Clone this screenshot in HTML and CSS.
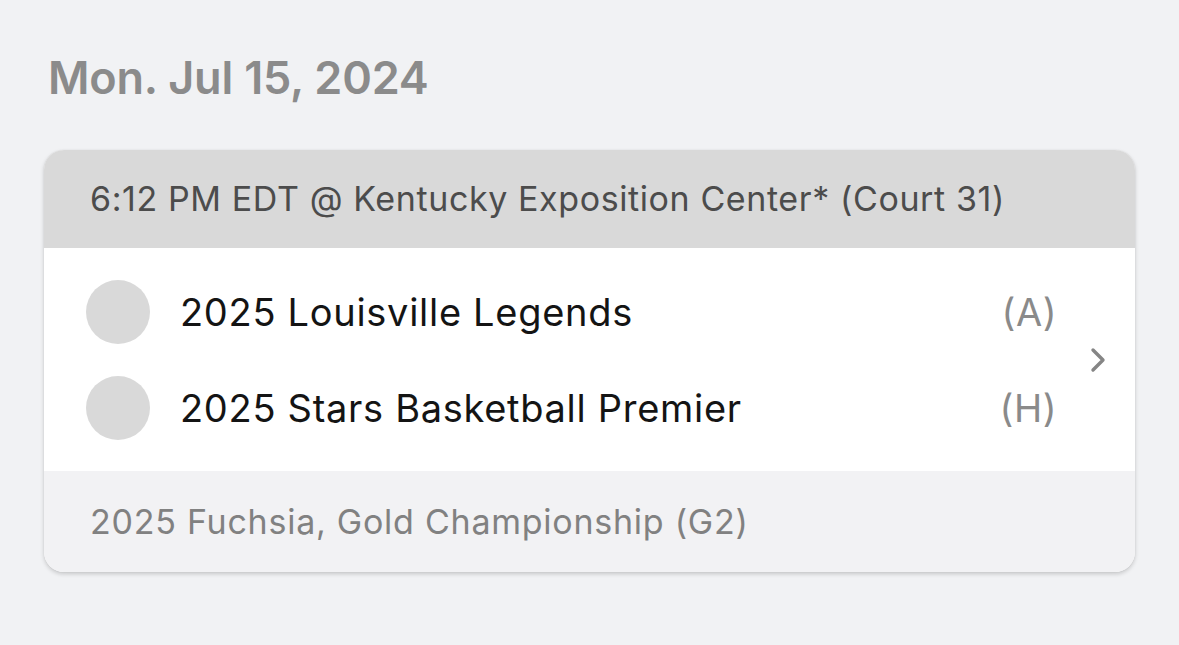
FILE: index.html
```html
<!DOCTYPE html>
<html>
<head>
<meta charset="utf-8">
<link rel="stylesheet" href="styles.css">
</head>
<body>
<main class="page">
  <h1 class="date">Mon. Jul 15, 2024</h1>
  <section class="card">
    <div class="card-head">6:12 PM EDT @ Kentucky Exposition Center* (Court 31)</div>
    <div class="card-body">
      <div class="teams">
        <div class="team">
          <span class="avatar"></span>
          <span class="name">2025 Louisville Legends</span>
          <span class="side">(A)</span>
        </div>
        <div class="team">
          <span class="avatar"></span>
          <span class="name">2025 Stars Basketball Premier</span>
          <span class="side">(H)</span>
        </div>
      </div>
      <svg class="chev" width="18" height="28" viewBox="0 0 18 28"><path d="M4 4 L14 14 L4 24" fill="none" stroke="#858585" stroke-width="3.4" stroke-linecap="round" stroke-linejoin="round"/></svg>
    </div>
    <div class="card-foot">2025 Fuchsia, Gold Championship (G2)</div>
  </section>
</main>
</body>
</html>
```
FILE: styles.css
```css
html, body {
  margin: 0;
  padding: 0;
  background: #f1f2f4;
}
body {
  font-family: "Inter", "Roboto", sans-serif;
  width: 1179px;
  height: 645px;
  overflow: hidden;
}
.page {
  padding: 54px 44px 0 44px;
}
.date {
  margin: 0 0 0 4px;
  font-size: 45px;
  font-weight: 600;
  color: #8b8b8b;
  line-height: 48px;
  letter-spacing: -0.2px;
}
.card {
  margin-top: 48px;
  width: 1091px;
  border-radius: 20px;
  overflow: hidden;
  background: #fff;
  box-shadow: 0 2px 4px rgba(0,0,0,0.18), 0 0 1px rgba(0,0,0,0.15);
}
.card-head {
  height: 98px;
  background: #d9d9d9;
  color: #4c4c4c;
  font-size: 34px;
  line-height: 98px;
  padding-left: 46px;
  letter-spacing: 0.6px;
}
.card-body {
  height: 223px;
  display: flex;
  align-items: center;
  background: #fff;
}
.teams {
  flex: 1;
  display: flex;
  flex-direction: column;
  gap: 32px;
  padding-left: 42px;
  padding-right: 32px;
}
.team {
  display: flex;
  align-items: center;
  height: 64px;
}
.avatar {
  width: 64px;
  height: 64px;
  border-radius: 50%;
  background: #d9d9d9;
  flex: none;
}
.name {
  flex: 1;
  margin-left: 30px;
  font-size: 38px;
  color: #141414;
  letter-spacing: 0.7px;
}
.side {
  font-size: 38px;
  color: #8a8a8a;
  letter-spacing: 0.5px;
}
.chev {
  margin-right: 28px;
  margin-top: 0;
}
.card-foot {
  height: 101px;
  background: #f2f2f4;
  color: #818181;
  font-size: 34px;
  line-height: 101px;
  padding-left: 46px;
  letter-spacing: 0.75px;
}
```
